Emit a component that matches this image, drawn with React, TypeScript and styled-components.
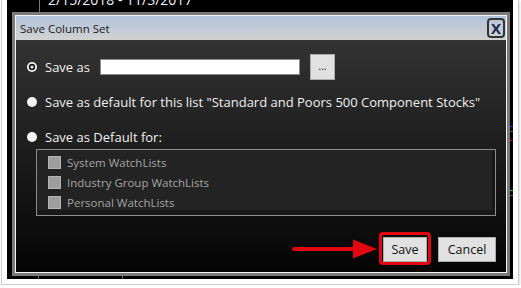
import React from "react";
import styled, { createGlobalStyle } from "styled-components";

const GlobalStyle = createGlobalStyle`
  html, body {
    margin: 0;
    background: #fff;
    font-family: "Open Sans", "Noto Sans", sans-serif;
  }
`;

const Frame = styled.div`
  margin-left: 1px;
  width: 518px;
  box-sizing: border-box;
  padding: 0 5px 5px 5px;
  border: 1px solid #cdcdcd;
  border-top: none;
  box-shadow: 1px 1px 2px rgba(0, 0, 0, 0.12);
`;

const Screen = styled.div`
  position: relative;
  height: 279px;
  box-sizing: border-box;
  padding: 12px 3px 3px 5px;
  background: #000;
  overflow: hidden;
`;

const BgText = styled.div`
  position: absolute;
  left: 41px;
  top: -8px;
  color: #f2f2f2;
  font-size: 14px;
  line-height: 16px;
`;

const BgTick = styled.div<{ $x: number; $y: number; $w: number; $h: number; $c: string }>`
  position: absolute;
  left: ${(p) => p.$x}px;
  top: ${(p) => p.$y}px;
  width: ${(p) => p.$w}px;
  height: ${(p) => p.$h}px;
  background: ${(p) => p.$c};
`;

const Dialog = styled.div`
  position: relative;
  z-index: 1;
  height: 100%;
  box-sizing: border-box;
  border: 3px solid #7a7a7a;
`;

const Inner = styled.div`
  height: 100%;
  box-sizing: border-box;
  border: 1px solid #f4f4f4;
  display: flex;
  flex-direction: column;
`;

const TitleBar = styled.div`
  height: 24px;
  flex: none;
  display: flex;
  align-items: center;
  justify-content: space-between;
  padding: 0 1px 0 4px;
  background: linear-gradient(#b2c3db, #d2d2d2);
  color: #1b1b1b;
  font-size: 11.5px;
`;

const CloseBox = styled.div`
  width: 18px;
  height: 20px;
  box-sizing: border-box;
  border: 2px solid #333;
  border-radius: 4px;
  display: flex;
  align-items: center;
  justify-content: center;
  font-size: 15px;
  font-weight: 700;
  color: #1c2a44;
  line-height: 1;
`;

const Body = styled.div`
  flex: 1;
  display: flex;
  flex-direction: column;
  padding: 14px 10px 0 11px;
  background: linear-gradient(#333333, #040404);
  color: #f0f0f0;
  font-size: 13px;
`;

const Row = styled.div<{ $h: number; $mt: number }>`
  display: flex;
  align-items: center;
  height: ${(p) => p.$h}px;
  margin-top: ${(p) => p.$mt}px;
  gap: 8px;
`;

const Label = styled.span<{ $w?: number }>`
  white-space: nowrap;
  ${(p) => (p.$w ? `width: ${p.$w}px;` : "")}
`;

const TextBox = styled.div`
  width: 200px;
  height: 16px;
  box-sizing: border-box;
  background: #fff;
  border: 1px solid #8a8a8a;
`;

const SmallButton = styled.div`
  width: 25px;
  height: 26px;
  margin-left: 2px;
  box-sizing: border-box;
  background: #e1e1e1;
  border: 1px solid #adadad;
  color: #111;
  font-size: 10px;
  display: flex;
  align-items: center;
  justify-content: center;
  padding-bottom: 2px;
`;

const Group = styled.div`
  width: 460px;
  height: 67px;
  margin: 2px 0 0 9px;
  box-sizing: border-box;
  border: 1px solid #8c8c8c;
  padding: 0 3px 5px 0;
  background: #181818;
`;

const GroupPanel = styled.div`
  height: 100%;
  padding: 2px 0 0 11px;
  background: #232323;
  box-sizing: border-box;
`;

const CheckRow = styled.div`
  display: flex;
  align-items: center;
  height: 20px;
  gap: 6px;
  color: #a4a4a4;
  font-size: 11.5px;
`;

const CheckBox = styled.div`
  width: 13px;
  height: 13px;
  box-sizing: border-box;
  background: #9e9e9e;
  border: 1px solid #b4b4b4;
`;

const ButtonRow = styled.div`
  display: flex;
  justify-content: flex-end;
  gap: 11px;
  margin-top: 21px;
`;

const Button = styled.div<{ $w: number }>`
  width: ${(p) => p.$w}px;
  height: 25px;
  box-sizing: border-box;
  background: #e1e1e1;
  border: 1px solid #adadad;
  color: #111;
  font-size: 12.5px;
  display: flex;
  align-items: center;
  justify-content: center;
`;

const Highlight = styled.div`
  position: relative;
  &::after {
    content: "";
    position: absolute;
    left: -4px;
    right: -4px;
    top: -5px;
    bottom: -3px;
    border: 3.5px solid #e3050f;
    border-radius: 4px;
  }
`;

const Arrow = styled.svg`
  position: absolute;
  left: -92px;
  top: 2px;
`;

function Radio({ checked }: { checked?: boolean }) {
  return (
    <svg width="10" height="10" viewBox="0 0 10 10" style={{ flex: "none" }}>
      <circle cx="5" cy="5" r="5" fill="#f4f4f4" />
      {checked && <circle cx="5" cy="5" r="2.4" fill="#e6e6e6" stroke="#1a1a1a" strokeWidth="1.6" />}
    </svg>
  );
}

export default function App() {
  return (
    <>
      <GlobalStyle />
      <Frame>
        <Screen>
          <BgText>2/15/2018 - 11/3/2017</BgText>
          <BgTick $x={32} $y={0} $w={1} $h={12} $c="#777" />
          <BgTick $x={503} $y={126} $w={4} $h={1} $c="#1a3cff" />
          <BgTick $x={503} $y={131} $w={4} $h={1} $c="#555" />
          <BgTick $x={503} $y={140} $w={4} $h={1} $c="#d01010" />
          <BgTick $x={503} $y={190} $w={3} $h={1} $c="#16d016" />
          <BgTick $x={503} $y={195} $w={4} $h={1} $c="#555" />
          <BgTick $x={31} $y={276} $w={1} $h={3} $c="#666" />
          <BgTick $x={115} $y={276} $w={1} $h={3} $c="#666" />
          <Dialog>
            <Inner>
              <TitleBar>
                <span>Save Column Set</span>
                <CloseBox>X</CloseBox>
              </TitleBar>
              <Body>
                <Row $h={26} $mt={0}>
                  <Radio checked />
                  <Label $w={47}>Save as</Label>
                  <TextBox />
                  <SmallButton>...</SmallButton>
                </Row>
                <Row $h={20} $mt={12}>
                  <Radio />
                  <Label>Save as default for this list "Standard and Poors 500 Component Stocks"</Label>
                </Row>
                <Row $h={20} $mt={15}>
                  <Radio />
                  <Label>Save as Default for:</Label>
                </Row>
                <Group>
                  <GroupPanel>
                    <CheckRow>
                      <CheckBox />
                      System WatchLists
                    </CheckRow>
                    <CheckRow>
                      <CheckBox />
                      Industry Group WatchLists
                    </CheckRow>
                    <CheckRow>
                      <CheckBox />
                      Personal WatchLists
                    </CheckRow>
                  </GroupPanel>
                </Group>
                <ButtonRow>
                  <Highlight>
                    <Arrow width="86" height="20" viewBox="0 0 86 20">
                      <line x1="3" y1="10" x2="64" y2="10" stroke="#e3050f" strokeWidth="4" strokeLinecap="round" />
                      <polygon points="62,0.5 86,10 62,19.5" fill="#e3050f" />
                    </Arrow>
                    <Button $w={44}>Save</Button>
                  </Highlight>
                  <Button $w={58}>Cancel</Button>
                </ButtonRow>
              </Body>
            </Inner>
          </Dialog>
        </Screen>
      </Frame>
    </>
  );
}
